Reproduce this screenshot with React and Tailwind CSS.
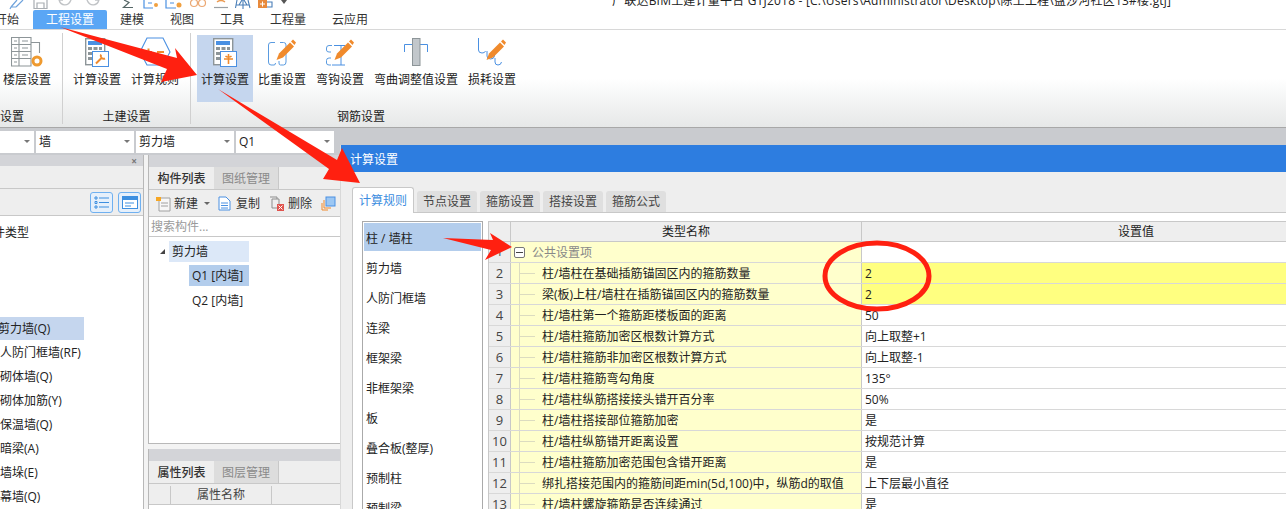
import React from 'react';

const font = { fontFamily: '"Open Sans", "Noto Sans CJK SC", sans-serif' };

const menus = [
    { name: '开始', w: 'w-[33px]', first: true },
    { name: '工程设置', w: 'w-[74px]', active: true },
    { name: '建模', w: 'w-[50px]' },
    { name: '视图', w: 'w-[50px]' },
    { name: '工具', w: 'w-[50px]' },
    { name: '工程量', w: 'w-[62px]' },
    { name: '云应用', w: 'w-[62px]' },
];

const leftItems = ['剪力墙(Q)', '人防门框墙(RF)', '砌体墙(Q)', '砌体加筋(Y)', '保温墙(Q)', '暗梁(A)', '墙垛(E)', '幕墙(Q)'];

const sideItems = ['柱 / 墙柱', '剪力墙', '人防门框墙', '连梁', '框架梁', '非框架梁', '板', '叠合板(整厚)', '预制柱', '预制梁'];

const dialogTabs = ['节点设置', '箍筋设置', '搭接设置', '箍筋公式'];

const rows = [
    [2, '柱/墙柱在基础插筋锚固区内的箍筋数量', '2', true],
    [3, '梁(板)上柱/墙柱在插筋锚固区内的箍筋数量', '2', true],
    [4, '柱/墙柱第一个箍筋距楼板面的距离', '50'],
    [5, '柱/墙柱箍筋加密区根数计算方式', '向上取整+1'],
    [6, '柱/墙柱箍筋非加密区根数计算方式', '向上取整-1'],
    [7, '柱/墙柱箍筋弯勾角度', '135°'],
    [8, '柱/墙柱纵筋搭接接头错开百分率', '50%'],
    [9, '柱/墙柱搭接部位箍筋加密', '是'],
    [10, '柱/墙柱纵筋错开距离设置', '按规范计算'],
    [11, '柱/墙柱箍筋加密范围包含错开距离', '是'],
    [12, '绑扎搭接范围内的箍筋间距min(5d,100)中，纵筋d的取值', '上下层最小直径'],
    [13, '柱/墙柱螺旋箍筋是否连续通过', '是'],
];

// orange pencil used by the rebar ribbon icons, about 21x22
function Pencil({ x = 0, y = 0 }) {
    return (
        <g transform={`translate(${x} ${y})`}>
            <path d="M4 14.500 L15 3.500 L19 7.500 L8 18.500 L1.500 21 Z" fill="#f08a2c" />
            <path d="M16 2.500 L18 0.500 L21 3.500 L19.500 6 Z" fill="#f08a2c" />
        </g>
    );
}

function IconFloor() {
    return (
        <svg width="32" height="30" viewBox="0 0 32 30" fill="none">
            <path d="M0.500 0.500H20V29H0.500Z M0.500 7.500H20 M0.500 14.500H20 M0.500 21.500H20 M8 0.500V29 M20 5.500H28.500V16" stroke="#8d9598" strokeWidth="1.100" />
            <path d="M3 4H6 M3 11H6 M3 18H6 M3 25H6 M11 4H17 M11 11H17 M11 18H17" stroke="#8d9598" />
            <circle cx="26" cy="24" r="4" stroke="#ef9a2f" strokeWidth="3" />
        </svg>
    );
}

function IconCalc({ badge }) {
    return (
        <svg width="24" height="29" viewBox="0 0 24 29" fill="none">
            <rect x="0.700" y="0.700" width="19" height="26" fill="#fff" stroke="#8d9598" strokeWidth="1.400" />
            <rect x="3" y="3" width="14" height="4" fill="#4a90e2" />
            <path d="M3 9h4v3H3z M8.500 9h4v3h-4z M14 9h3v3h-3z M3 14h4v3H3z M8.500 14h4v3h-4z M3 19h4v3H3z M8.500 19h4v3h-4z" fill="#8d9598" />
            <rect x="7.500" y="13.500" width="16" height="15" fill="#fff" stroke="#4a90e2" />
            {badge === 'plus' ? (
                <path d="M15.500 16v10 M11 21h9 M12.500 18c1.500 1.500 4.500 1.500 6 0" stroke="#f08a2c" strokeWidth="1.600" />
            ) : (
                <path d="M11 25.500 L17 19.500 M16 16.500 a3 3 0 0 0 4 4" stroke="#f08a2c" strokeWidth="2" />
            )}
        </svg>
    );
}

function IconRule() {
    return (
        <svg width="32" height="30" viewBox="0 0 32 30" fill="none">
            <path d="M8 1H24L31 15L24 28H8L1 15Z" stroke="#4a90e2" strokeWidth="1.100" />
            <path d="M6 15h7 M9.500 11.500v7 M18 15h7" stroke="#f08a2c" strokeWidth="2" />
        </svg>
    );
}

function IconWeight() {
    return (
        <svg width="28" height="27" viewBox="0 0 28 27" fill="none">
            <path d="M7 3.500H3Q0.500 3.500 0.500 6V23Q0.500 26 3 26H6Q7.500 26 7.500 24" stroke="#5a9be0" />
            <path d="M12 3.500H15.500Q18 3.500 18 6V23Q18 26 15.500 26H12.500Q11 26 11 24V22" stroke="#5a9be0" />
            <Pencil x={7} y={0} />
        </svg>
    );
}

function IconHook() {
    return (
        <svg width="28" height="27" viewBox="0 0 28 27" fill="none">
            <path d="M8 6.500H19 M15 6.500V26 M6 26H19" stroke="#4a90e2" />
            <path d="M6 6.500H3Q0.500 6.500 0.500 9V11Q0.500 13 3 13H5 M5 19H3Q0.500 19 0.500 21.500V24Q0.500 26 3 26H5" stroke="#5a9be0" />
            <Pencil x={7} y={0} />
        </svg>
    );
}

function IconBend() {
    return (
        <svg width="24" height="28" viewBox="0 0 24 28" fill="none">
            <path d="M0.500 14V6.500H23.500V14" stroke="#4a90e2" />
            <rect x="8.500" y="0.500" width="7.500" height="27" fill="#c2c7cb" stroke="#8d9598" />
        </svg>
    );
}

function IconLoss() {
    return (
        <svg width="28" height="28" viewBox="0 0 28 28" fill="none">
            <path d="M0.500 0V12Q0.500 15 4 15Q7 15 7.500 13" stroke="#4a90e2" />
            <path d="M9 13V18Q9 21 12.500 21Q16 21 16.500 18V15" stroke="#4a90e2" />
            <path d="M17 20V24Q17 27 20 27Q23 27 23.500 24" stroke="#4a90e2" />
            <Pencil x={7} y={1} />
        </svg>
    );
}

function RibbonButton({ label, width, active, children }) {
    return (
        <div className={`${width} h-[67px] shrink-0 flex flex-col items-center ${active ? 'bg-[#c5d6ee]' : ''}`}>
            <div className="h-[30px] mt-[2px] flex items-center justify-center">{children}</div>
            <div className="mt-[4px] h-[18px] leading-[18px] text-[12px] text-[#222] whitespace-nowrap">{label}</div>
        </div>
    );
}

function Combo({ label, width }) {
    return (
        <div className={`${width} h-[22px] bg-white flex items-center justify-between pl-[3px] pr-[4px] text-[12px] text-[#222] shrink-0`}>
            <span>{label}</span>
            <span className="w-0 h-0 border-x-[3px] border-x-transparent border-t-[3px] border-t-[#777]" />
        </div>
    );
}

function PanelTabs({ first, second }) {
    return (
        <div className="h-[23px] shrink-0 flex bg-[#eeeeee] border-b border-[#c8c8c8]">
            <div className="w-[65px] pt-[2px] flex items-center justify-center text-[12px] font-medium text-[#333]">{first}</div>
            <div className="w-[65px] pt-[2px] flex items-center justify-center text-[12px] text-[#8a8a8a] bg-[#dddddd] border-r border-[#c8c8c8]">{second}</div>
        </div>
    );
}

// quick access bar, only the lower part of the icons is inside the picture
function QuickBar() {
    return (
        <svg className="absolute left-0 top-0" width="300" height="10" viewBox="0 0 300 10" fill="none">
            <path d="M11 7 L17 0 M11 7 L10 9 M16 7 L23 0 M11 7H16" stroke="#6fa3dc" strokeWidth="1.200" />
            <path d="M34 0V8.500H47V0 M37 8V3H44V8" stroke="#a8adb2" strokeWidth="1.200" />
            <path d="M59 0C61 6 68 7 71 0 M59 0H63" stroke="#c0c3c6" strokeWidth="1.400" />
            <path d="M99 0C97 6 90 7 87 0 M99 0H95" stroke="#c0c3c6" strokeWidth="1.400" />
            <path d="M124 0 L129 2.500 L123.500 7.500H133" stroke="#566" strokeWidth="1.200" />
            <path d="M144 0V8H153 M148 3H152" stroke="#4a90e2" strokeWidth="1.200" />
            <circle cx="156" cy="5" r="2" fill="#f0a040" />
            <path d="M166 0V8H176 M170 3H174" stroke="#4a90e2" strokeWidth="1.200" />
            <circle cx="179" cy="5" r="2.500" fill="#f0a040" />
            <circle cx="194" cy="3" r="3.500" stroke="#eba873" strokeWidth="1.200" />
            <circle cx="202" cy="3" r="3.500" stroke="#eba873" strokeWidth="1.200" />
            <path d="M217 2Q221 -1 225 2" stroke="#eb9a50" strokeWidth="1.400" />
            <path d="M214 7.500H228" stroke="#9aa0a4" strokeWidth="1.200" />
            <path d="M235.500 8L237 0 M243 0V9 M250 8L248 0 M236 5H249 M239 5L242 0 M244 0L247 5" stroke="#4a7fb8" strokeWidth="1.100" />
            <rect x="258" y="0" width="9" height="8" fill="#e88a3c" />
            <path d="M262.500 1.500V6.500 M260 4H265" stroke="#fff" />
            <path d="M267 2H272V7H267" stroke="#4a7fb8" strokeWidth="1.100" />
            <path d="M281 0H287L284 4Z" fill="#555" />
        </svg>
    );
}

function SmallToolIcon({ kind }) {
    if (kind === 'new') {
        return (
            <svg width="15" height="16" viewBox="0 0 15 16" fill="none">
                <path d="M3 2H14V15H3Z" fill="#f7f7f7" stroke="#a0a0a0" />
                <path d="M5 7H12 M5 10H12" stroke="#a0a0a0" />
                <path d="M0 1h5v4H0z" fill="#f6a623" />
            </svg>
        );
    }
    if (kind === 'copy') {
        return (
            <svg width="13" height="15" viewBox="0 0 13 15" fill="none">
                <path d="M1 1H8L12 5V14H1Z" fill="#fff" stroke="#4a90e2" />
                <path d="M3 7H10 M3 9.500H10 M3 12H10" stroke="#4a90e2" />
            </svg>
        );
    }
    if (kind === 'delete') {
        return (
            <svg width="15" height="15" viewBox="0 0 15 15" fill="none">
                <path d="M1 1H8V3 M3 3H10V12H3Z" stroke="#8d8d8d" />
                <rect x="8" y="8" width="7" height="7" fill="#e0534d" />
                <path d="M9.500 9.500l4 4 M13.500 9.500l-4 4" stroke="#fff" />
            </svg>
        );
    }
    return (
        <svg width="15" height="15" viewBox="0 0 15 15" fill="none">
            <rect x="5" y="1" width="9" height="9" fill="#9cc7f3" stroke="#4a90e2" />
            <path d="M3 4V12H10 M1 7V14H7" stroke="#f08a2c" />
        </svg>
    );
}

function ViewButton({ kind }) {
    return (
        <div className="w-[23px] h-[21px] rounded-[3px] border border-[#6fb0f0] bg-[#e6f0fb] flex items-center justify-center">
            {kind === 'list' ? (
                <svg width="15" height="13" viewBox="0 0 15 13" fill="none">
                    <path d="M1 1h2v2H1z M1 5.500h2v2H1z M1 10h2v2H1z M5 2h10 M5 6.500h10 M5 11h10" stroke="#3d8fe0" />
                </svg>
            ) : (
                <svg width="16" height="13" viewBox="0 0 16 13" fill="none">
                    <rect x="0.500" y="0.500" width="15" height="12" fill="#fff" stroke="#3d8fe0" />
                    <rect x="1" y="1" width="14" height="3" fill="#3d8fe0" />
                    <path d="M3 7H12 M3 10H9" stroke="#3d8fe0" />
                </svg>
            )}
        </div>
    );
}

function LeftPanel() {
    return (
        <div className="w-[144px] shrink-0 flex flex-col border-r border-[#b8b8b8] bg-white overflow-hidden">
            <div className="h-[11px] shrink-0 bg-[#d3d4d8] flex items-center justify-end pr-[6px] text-[10px] leading-none text-[#777] font-bold">×</div>
            <div className="h-[22px] shrink-0 bg-[#eeeeee]" />
            <div className="h-[28px] shrink-0 bg-[#eeeeee] border-y border-[#c8c8c8] flex items-center justify-end gap-[5px] pr-[2px]">
                <ViewButton kind="list" />
                <ViewButton kind="card" />
            </div>
            <div className="h-[30px] pt-[4px] shrink-0 flex items-center text-[12px] text-[#222] -ml-[7px]">件类型</div>
            <div className="mt-[71px] shrink-0 flex flex-col text-[12px] text-[#222]">
                {leftItems.map((item, i) => (
                    <div key={item} className={`shrink-0 flex items-center whitespace-nowrap ${i === 0 ? 'h-[23px] bg-[#c5d6ee] w-[86px] -ml-[2px]' : 'h-[24px] pt-[2px]'}`}>
                        {item}
                    </div>
                ))}
            </div>
        </div>
    );
}

function MiddlePanel() {
    return (
        <div className="ml-[4px] flex-1 flex flex-col bg-[#f3f3f3] overflow-hidden">
            <div className="h-[289px] flex flex-col bg-white border border-t-0 border-[#b8b8b8] shrink-0">
                <div className="h-[12px] bg-[#d3d4d8] shrink-0" />
                <PanelTabs first="构件列表" second="图纸管理" />
                <div className="h-[27px] pt-[1px] bg-[#eeeeee] border-b border-[#c8c8c8] flex items-center pl-[7px] text-[12px] text-[#333] whitespace-nowrap shrink-0">
                    <SmallToolIcon kind="new" />
                    <span className="ml-[3px]">新建</span>
                    <span className="ml-[6px] w-0 h-0 border-x-[3px] border-x-transparent border-t-[3px] border-t-[#666]" />
                    <span className="ml-[8px]"><SmallToolIcon kind="copy" /></span>
                    <span className="ml-[5px]">复制</span>
                    <span className="ml-[9px]"><SmallToolIcon kind="delete" /></span>
                    <span className="ml-[4px]">删除</span>
                    <span className="ml-[9px]"><SmallToolIcon kind="more" /></span>
                </div>
                <div className="h-[20px] border-b border-[#c8c8c8] flex items-center pl-[2px] text-[12px] text-[#9a9a9a] shrink-0">搜索构件...</div>
                <div className="pt-[4px] text-[12px] text-[#222]">
                    <div className="flex items-center">
                        <svg className="ml-[10px]" width="7" height="7" viewBox="0 0 7 7">
                            <path d="M6 1V6H1Z" fill="#444" />
                        </svg>
                        <div className="ml-[3px] w-[80px] h-[21px] bg-[#dce8f8] pl-[3px] flex items-center">剪力墙</div>
                    </div>
                    <div className="ml-[40px] mt-[3px] w-[60px] h-[21px] bg-[#b3cdec] pl-[3px] flex items-center whitespace-nowrap">Q1 [内墙]</div>
                    <div className="ml-[40px] mt-[3px] w-[60px] h-[21px] pl-[3px] pt-[2px] flex items-center whitespace-nowrap">Q2 [内墙]</div>
                </div>
            </div>
            <div className="mt-[5px] flex flex-col bg-white border-x border-[#b8b8b8] flex-1">
                <div className="h-[12px] bg-[#d3d4d8] shrink-0" />
                <PanelTabs first="属性列表" second="图层管理" />
                <div className="h-[21px] pt-[2px] bg-[#eeeeee] flex border-b border-[#c8c8c8] text-[12px] text-[#444] shrink-0">
                    <div className="w-[22px] border-r border-[#c8c8c8]" />
                    <div className="w-[101px] border-r border-[#c8c8c8] flex items-center justify-center">属性名称</div>
                </div>
            </div>
        </div>
    );
}

function SettingsDialog() {
    return (
        <div className="absolute left-[340px] top-[145px] w-[946px] h-[364px] flex flex-col bg-[#eeeeee] overflow-hidden border-l border-[#d8d8d8]">
            <div className="h-[27px] pt-[2px] bg-[#2d7de0] shrink-0 pl-[9px] flex items-center text-[12px] text-white">计算设置</div>
            <div className="mt-[15px] ml-[11px] h-[26px] flex items-end shrink-0 border-b border-[#c8c8c8]">
                <div className="w-[62px] h-[26px] -mb-[1px] bg-white border border-b-0 border-[#c8c8c8] rounded-t-[3px] flex items-center justify-center text-[12px] text-[#3b8de0]">计算规则</div>
                <div className="ml-[3px] flex gap-[3px]">
                    {dialogTabs.map((tab) => (
                        <div key={tab} className="w-[60px] h-[21px] bg-[#dfdfdf] rounded-t-[3px] flex items-center justify-center text-[12px] text-[#444]">{tab}</div>
                    ))}
                </div>
            </div>
            <div className="ml-[11px] flex-1 flex bg-white border-l border-[#c8c8c8] pl-[9px] pt-[8px] overflow-hidden">
                <div className="w-[121px] shrink-0 border border-b-0 border-[#aaaaaa] p-[1px] text-[12px] text-[#222]">
                    {sideItems.map((item, i) => (
                        <div key={item} className={`pl-[2px] flex items-center whitespace-nowrap ${i === 0 ? 'h-[28px] pt-[3px] mb-[2px] bg-[#b3cdec]' : 'h-[30px] pt-[2px]'}`}>{item}</div>
                    ))}
                </div>
                <div className="ml-[5px] w-[922px] shrink-0 border-l border-t border-[#c8c8c8] text-[12px] text-[#222]">
                    <div className="flex h-[20px] bg-[#eeeeee] border-b border-[#c8c8c8]">
                        <div className="w-[22px] shrink-0 border-r border-[#c8c8c8]" />
                        <div className="w-[351px] shrink-0 border-r border-[#c8c8c8] flex items-center justify-center">类型名称</div>
                        <div className="w-[548px] shrink-0 flex items-center justify-center">设置值</div>
                    </div>
                    <div className="flex h-[21px] border-b border-[#d8d8d8]">
                        <div className="w-[22px] shrink-0 bg-[#eeeeee] border-r border-[#c8c8c8] flex items-center justify-center text-[13px] text-[#555]">1</div>
                        <div className="w-[351px] shrink-0 bg-[#ffffcc] border-r border-[#c8c8c8] flex items-center pl-[3px] text-[#888]">
                            <div className="w-[11px] h-[11px] border border-[#777] rounded-[2px] bg-white flex items-center justify-center">
                                <div className="w-[7px] h-px bg-[#444]" />
                            </div>
                            <span className="ml-[7px] mt-[2px]">公共设置项</span>
                        </div>
                        <div className="w-[548px] shrink-0 bg-white" />
                    </div>
                    {rows.map(([no, name, value, marked]) => (
                        <div key={no} className="flex h-[21px] border-b border-[#d8d8d8]">
                            <div className="w-[22px] pt-[2px] shrink-0 bg-[#eeeeee] border-r border-[#c8c8c8] flex items-center justify-center text-[13px] text-[#444]">{no}</div>
                            <div className="w-[351px] shrink-0 bg-[#ffffcc] border-r border-[#c8c8c8] flex items-center whitespace-nowrap">
                                <div className="ml-[8px] w-px h-full bg-[#dcdcc0]" />
                                <div className="w-[15px] h-px bg-[#dcdcc0]" />
                                <span className="ml-[7px] mt-[2px]">{name}</span>
                            </div>
                            <div className={`w-[548px] shrink-0 pl-[3px] pt-[2px] flex items-center ${marked ? 'bg-[#ffff80]' : 'bg-white'}`}>{value}</div>
                        </div>
                    ))}
                </div>
            </div>
        </div>
    );
}

export default function App() {
    return (
        <div className="relative w-[1286px] h-[509px] overflow-hidden bg-white flex flex-col" style={font}>
            {/* Title strip, cut off by the top of the picture */}
            <div className="relative h-[10px] shrink-0 overflow-hidden">
                <QuickBar />
                <div className="absolute left-[612px] -top-[8px] text-[12px] leading-[18px] tracking-[0.21px] text-[#222] whitespace-nowrap">
                    广联达BIM土建计量平台 GTJ2018 - [C:\Users\Administrator\Desktop\陈土工程\盘沙河社区13#楼.gtj]
                </div>
            </div>

            {/* Menu tabs */}
            <div className="h-[20px] shrink-0 flex border-b border-[#d8d8d8]">
                {menus.map((m) => (
                    <div
                        key={m.name}
                        className={`${m.w} ${m.active ? 'bg-[#5aa6f5] text-white rounded-t-[2px]' : 'text-[#333]'} ${m.first ? 'justify-start' : 'justify-center'} flex items-center text-[12px] whitespace-nowrap`}
                    >
                        <span className={m.first ? '-ml-[5px]' : ''}>{m.name}</span>
                    </div>
                ))}
            </div>

            {/* Ribbon */}
            <div className="h-[97px] shrink-0 flex bg-gradient-to-b from-white from-50% to-[#e6e8e8]">
                <div className="w-[63px] shrink-0 border-r border-[#d0d0d0] mt-[3px] mb-[3px] flex flex-col">
                    <div className="pt-[2px]">
                        <RibbonButton label="楼层设置" width="w-[54px]"><IconFloor /></RibbonButton>
                    </div>
                    <div className="mt-[6px] h-[18px] leading-[18px] text-[12px] text-[#222] -ml-[24px]">楼层设置</div>
                </div>
                <div className="w-[128px] shrink-0 border-r border-[#d0d0d0] mt-[3px] mb-[3px] flex flex-col">
                    <div className="pt-[2px] pl-[5px] flex">
                        <RibbonButton label="计算设置" width="w-[58px]"><IconCalc /></RibbonButton>
                        <RibbonButton label="计算规则" width="w-[58px]"><IconRule /></RibbonButton>
                    </div>
                    <div className="mt-[6px] h-[18px] leading-[18px] text-[12px] text-[#222] text-center">土建设置</div>
                </div>
                <div className="flex-1 mt-[3px] mb-[3px] pl-[6px] flex flex-col">
                    <div className="pt-[2px] flex">
                        <RibbonButton label="计算设置" width="w-[56px]" active><IconCalc badge="plus" /></RibbonButton>
                        <RibbonButton label="比重设置" width="w-[58px]"><IconWeight /></RibbonButton>
                        <RibbonButton label="弯钩设置" width="w-[58px]"><IconHook /></RibbonButton>
                        <RibbonButton label="弯曲调整值设置" width="w-[94px]"><IconBend /></RibbonButton>
                        <RibbonButton label="损耗设置" width="w-[58px]"><IconLoss /></RibbonButton>
                    </div>
                    <div className="mt-[6px] w-[328px] h-[18px] leading-[18px] text-[12px] text-[#222] text-center">钢筋设置</div>
                </div>
            </div>

            {/* Combo bar */}
            <div className="h-[28px] shrink-0 bg-[#c9cbcf] border-t border-[#a8a8a8] flex items-center gap-[2px]">
                <Combo label="" width="w-[34px]" />
                <Combo label="墙" width="w-[98px]" />
                <Combo label="剪力墙" width="w-[98px]" />
                <Combo label="Q1" width="w-[98px]" />
            </div>

            {/* Panels */}
            <div className="flex-1 flex min-h-0 bg-[#f3f3f3]">
                <LeftPanel />
                <MiddlePanel />
            </div>

            <SettingsDialog />

            {/* Red annotation arrows and circle drawn on top of the screenshot */}
            <svg className="absolute inset-0 pointer-events-none" width="1286" height="509" viewBox="0 0 1286 509" fill="none">
                <path d="M60 27 L177 58 L175 48 L197 75 L161 82 L167 69 Z" fill="#ff2010" />
                <path d="M218 89 L337 160 L342 148 L360 183 L323 179 L329 169 Z" fill="#ff2010" />
                <path d="M443 238 L493 240 L490 233 L512 247 L485 260 L491 250 Z" fill="#ff2010" />
                <ellipse cx="877" cy="276" rx="52" ry="33" stroke="#ff2010" strokeWidth="5" />
            </svg>
        </div>
    );
}
